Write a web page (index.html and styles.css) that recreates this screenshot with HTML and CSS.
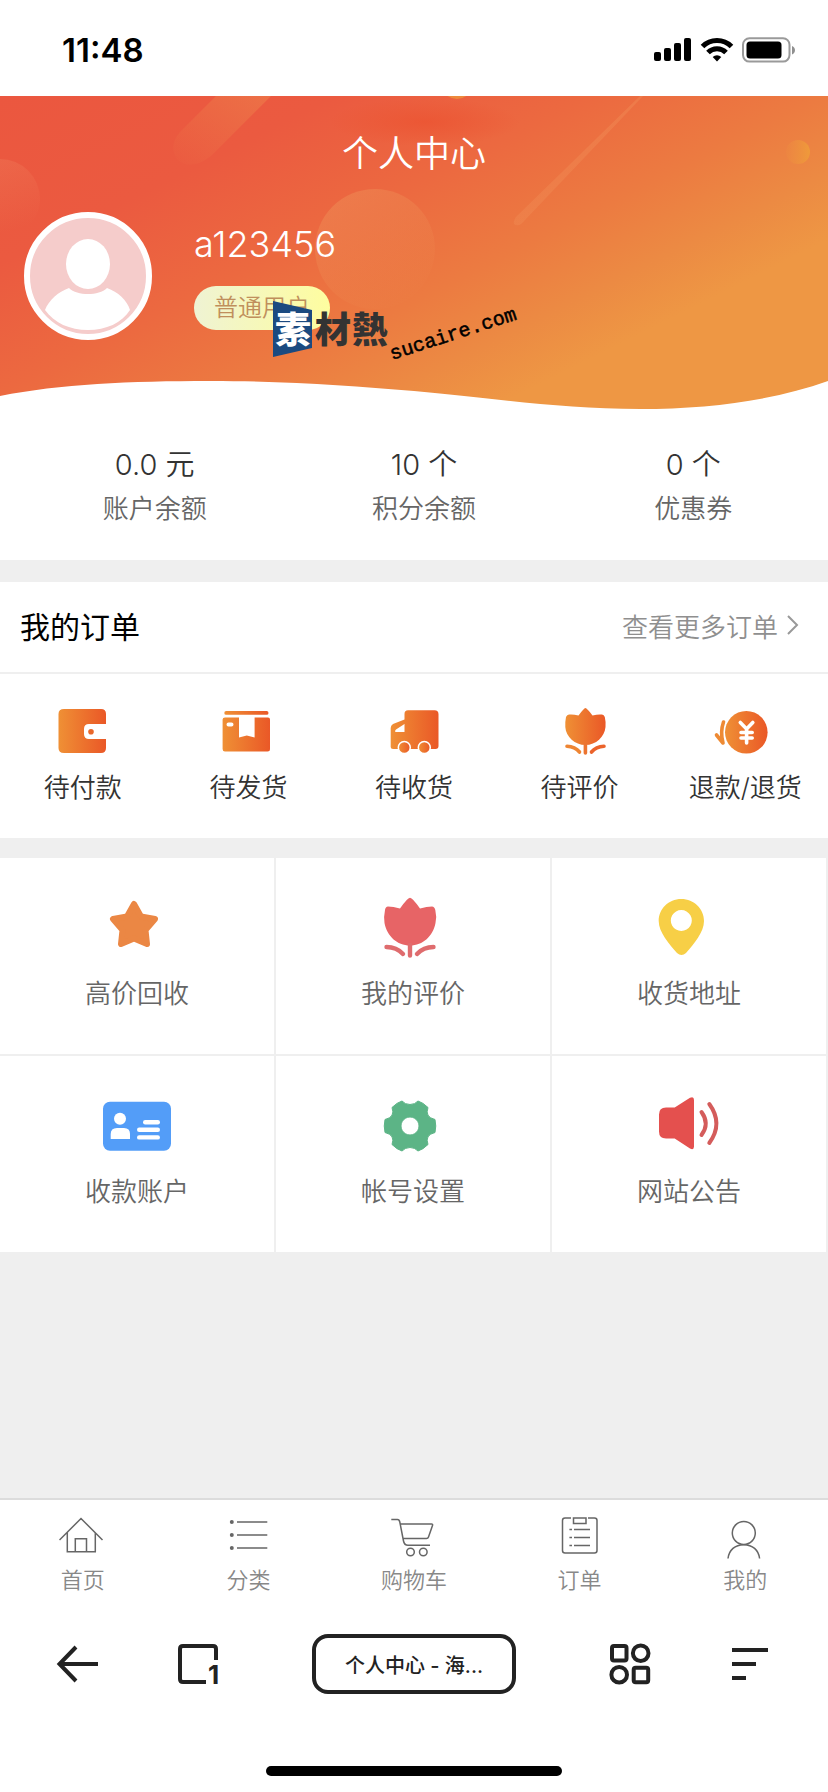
FILE: index.html
```html
<!DOCTYPE html>
<html lang="zh-CN">
<head>
<meta charset="utf-8">
<meta name="viewport" content="width=device-width, initial-scale=1">
<title>个人中心</title>
<link rel="stylesheet" href="styles.css">
</head>
<body>
<svg class="defs" width="0" height="0" aria-hidden="true">
  <defs>
    <linearGradient id="flame" x1="0" x2="1" y1="0" y2="0">
      <stop offset="0" stop-color="#ef9035"/>
      <stop offset="1" stop-color="#ea5827"/>
    </linearGradient>
  </defs>
</svg>

<div class="status">
  <time class="clock">11:48</time>
  <svg class="status-icons" width="142" height="26" viewBox="0 0 142 26" aria-label="信号、无线网络和电量">
    <rect x="0" y="15" width="7" height="9" rx="2"/>
    <rect x="10" y="11" width="7" height="13" rx="2"/>
    <rect x="20" y="6" width="7" height="18" rx="2"/>
    <rect x="30" y="1" width="7" height="23" rx="2"/>
    <g fill="none" stroke="#000" stroke-width="5">
      <path d="M48.500 9.500a20.500 20.500 0 0 1 29 0"/>
      <path d="M54 15.500a12.500 12.500 0 0 1 18 0"/>
    </g>
    <path d="M63 24.500l-4.300-4.400a6.200 6.200 0 0 1 8.600 0z"/>
    <rect x="89" y="1.200" width="46.500" height="23.400" rx="6.500" fill="none" stroke="#9a9a9a" stroke-width="2"/>
    <rect x="92.500" y="4.500" width="35" height="17" rx="3.500"/>
    <path d="M138 9c4 1.500 4 7 0 8.500z" fill="#8f8f8f"/>
  </svg>
</div>

<header class="hero">
  <svg class="hero-art" viewBox="0 0 828 314" preserveAspectRatio="none" aria-hidden="true">
    <defs>
      <linearGradient id="sky" gradientUnits="userSpaceOnUse" x1="0" y1="0" x2="224" y2="447">
        <stop offset="0" stop-color="#eb573f"/>
        <stop offset=".3" stop-color="#eb5a40"/>
        <stop offset=".53" stop-color="#ec6940"/>
        <stop offset=".74" stop-color="#ec7b41"/>
        <stop offset=".88" stop-color="#ec8a43"/>
        <stop offset="1" stop-color="#ee9744"/>
      </linearGradient>
      <linearGradient id="bubble" x1="0" y1="0" x2=".6" y2="1">
        <stop offset="0" stop-color="#f0a060" stop-opacity=".4"/>
        <stop offset="1" stop-color="#f0a060" stop-opacity=".02"/>
      </linearGradient>
      <linearGradient id="haze" x1="0" y1="0" x2=".3" y2="1">
        <stop offset="0" stop-color="#f0805c" stop-opacity=".4"/>
        <stop offset="1" stop-color="#f0805c" stop-opacity="0"/>
      </linearGradient>
      <linearGradient id="beam" x1="1" y1="0" x2="0" y2="1">
        <stop offset="0" stop-color="#ed7648" stop-opacity=".8"/>
        <stop offset="1" stop-color="#ed7648" stop-opacity=".03"/>
      </linearGradient>
      <linearGradient id="trail" x1="1" y1="0" x2="0" y2="1">
        <stop offset="0" stop-color="#f2935a" stop-opacity=".35"/>
        <stop offset="1" stop-color="#f2935a" stop-opacity=".3"/>
      </linearGradient>
      <linearGradient id="coin" x1="0" y1="0" x2="1" y2="0">
        <stop offset="0" stop-color="#ee9040" stop-opacity=".2"/>
        <stop offset="1" stop-color="#ef9a3a"/>
      </linearGradient>
      <radialGradient id="glow">
        <stop offset="0" stop-color="#ec5230" stop-opacity=".7"/>
        <stop offset="1" stop-color="#ec5230" stop-opacity="0"/>
      </radialGradient>
    </defs>
    <rect width="828" height="314" fill="url(#sky)"/>
    <ellipse cx="425" cy="26" rx="95" ry="24" fill="url(#glow)"/>
    <path d="M216 0H271L211 60Q190 76 177 63Q168 50 180 36Z" fill="url(#beam)"/>
    <circle cx="0" cy="103" r="40" fill="url(#haze)"/>
    <circle cx="375" cy="153" r="60" fill="url(#bubble)"/>
    <path d="M640 0h3L525 124q-6 8-11 4q-1-5 5-10z" fill="url(#trail)"/>
    <circle cx="798" cy="56" r="12" fill="url(#coin)"/>
    <circle cx="457" cy="-13" r="16" fill="#ed8a3c"/>
    <path d="M0 300C60 288 130 285 210 285C290 285 350 290 414 295C500 303 560 313 640 313C710 313 775 304 828 285V315H0Z" fill="#fff"/>
  </svg>
  <h1 class="title">个人中心</h1>
  <div class="profile">
    <svg class="avatar" width="128" height="128" viewBox="0 0 128 128" role="img" aria-label="头像">
      <circle cx="64" cy="64" r="61" fill="#f5cccb" stroke="#fff" stroke-width="6"/>
      <ellipse cx="64" cy="52" rx="22" ry="25" fill="#fff"/>
      <path d="M45 76C53 84 75 84 83 76C94 80 103 88 106 98C98 111 82 118 64 118C46 118 30 111 21 98C25 88 34 80 45 76Z" fill="#fff"/>
    </svg>
    <div class="who">
      <span class="name">a123456</span>
      <span class="level">普通用户</span>
    </div>
  </div>
  <svg class="watermark" width="250" height="70" viewBox="0 0 250 70" role="img" aria-label="素材熱 sucaire.com">
    <path d="M0 5L39 14V52L0 61Z" fill="#1b4a80"/>
    <text class="mark" x="2" y="47" fill="#fff">素</text>
    <text class="mark" x="42" y="47" fill="#333">材</text>
    <text class="mark" x="79" y="47" fill="#333">熱</text>
    <text class="site" transform="translate(119 64) rotate(-18)">sucaire.com</text>
  </svg>
</header>

<section class="stats">
  <a class="stat" href="#"><span class="stat-num">0.0 元</span><span class="stat-name">账户余额</span></a>
  <a class="stat" href="#"><span class="stat-num">10 个</span><span class="stat-name">积分余额</span></a>
  <a class="stat" href="#"><span class="stat-num">0 个</span><span class="stat-name">优惠券</span></a>
</section>

<section class="orders">
  <div class="orders-head">
    <h2 class="orders-title">我的订单</h2>
    <a class="more" href="#">查看更多订单
      <svg width="14" height="20" viewBox="0 0 14 20" fill="none" stroke="#999" stroke-width="2" aria-hidden="true"><path d="M2 1l9 9-9 9"/></svg>
    </a>
  </div>
  <div class="order-row">
    <a class="order" href="#">
      <svg class="order-icon" viewBox="0 0 56 56" fill="url(#flame)" aria-hidden="true">
        <path d="M9 7H46Q51 7 51 12V22H34Q29 22 29 27V32Q29 37 34 37H51V46Q51 51 46 51H9Q3.500 51 3.500 46V12Q3.500 7 9 7Z"/>
        <circle cx="36" cy="29.700" r="2.800" fill="#e9672a"/>
      </svg>
      待付款</a>
    <a class="order" href="#">
      <svg class="order-icon" viewBox="0 0 56 56" fill="url(#flame)" aria-hidden="true">
        <rect x="4.300" y="9" width="44.200" height="3.800" rx="1.900"/>
        <path fill-rule="evenodd" d="M5 15.500H19V35.500L26.800 33.500L34.600 35.500V15.500H48Q50 15.500 50 17.500V47Q50 49.500 47.500 49.500H5Q2.600 49.500 2.600 47V17.500Q2.600 15.500 5 15.500ZM8.500 20.500a2 2 0 0 0 0 4h3a2 2 0 0 0 0-4z"/>
      </svg>
      待发货</a>
    <a class="order" href="#">
      <svg class="order-icon" viewBox="0 0 56 56" fill="url(#flame)" aria-hidden="true">
        <path fill-rule="evenodd" d="M22 8.300H48.500Q52.500 8.300 52.500 12.300V44Q52.500 47 49.500 47H7Q4.700 47 4.700 45V26Q4.700 23.500 7 22L18.500 17.500V12Q18.500 8.300 22 8.300ZM18.500 22L10 27.500Q8 30 10 30H18.500Z"/>
        <g stroke="#fff" stroke-width="1.500">
          <circle cx="18.300" cy="45.500" r="6"/>
          <circle cx="38.300" cy="45.500" r="6"/>
        </g>
      </svg>
      待收货</a>
    <a class="order" href="#">
      <svg class="order-icon" viewBox="0 0 56 56" aria-hidden="true">
        <path d="M33.400 6Q35 6 40.500 13.500Q46 12 50 12.500Q52 12.500 52.800 15Q54 20 53.500 25C52.500 35 44 43 33.400 43C23 43 14 35 13.300 25Q13 20 14 15Q15 12.500 17 12.500Q21 12 26.500 13.500Q32 6 33.400 6Z" fill="url(#flame)"/>
        <g fill="none" stroke-width="3.600" stroke-linecap="round">
          <path d="M33.400 43V51" stroke="#ec7430"/>
          <path d="M15 44.200Q23 44.500 27.500 50" stroke="#ee8533"/>
          <path d="M52 44.200Q44 44.500 39.500 50" stroke="#eb632b"/>
        </g>
      </svg>
      待评价</a>
    <a class="order" href="#">
      <svg class="order-icon" viewBox="0 0 56 56" aria-hidden="true">
        <circle cx="29.300" cy="30.300" r="21.300" fill="url(#flame)"/>
        <path d="M6.500 20Q3 30 6 41L-0.500 33" fill="none" stroke="#ee8a33" stroke-width="3.600" stroke-linecap="round" stroke-linejoin="round"/>
        <path d="M23.300 20.500L29.600 27L35.800 20.500M29.600 27V41M24 30.500H35.200M24 36H35.200" fill="none" stroke="#fff" stroke-width="3.600" stroke-linecap="round"/>
      </svg>
      退款/退货</a>
  </div>
</section>

<nav class="tiles" aria-label="功能">
  <a class="tile" href="#">
    <svg class="tile-icon" viewBox="0 0 80 72" aria-hidden="true">
      <path d="M37 14L44 26.500L58 29L48.500 40L50 54L37 48.500L24 54L25.500 40L16 29L30 26.500Z" fill="#eb8744" stroke="#eb8744" stroke-width="6" stroke-linejoin="round"/>
    </svg>
    高价回收</a>
  <a class="tile" href="#">
    <svg class="tile-icon" viewBox="0 0 80 72" aria-hidden="true">
      <path d="M37 7.700Q39.500 7.700 47 18.500Q54 16.500 59 16.500Q61.500 16.500 62.300 20Q64 27 62.500 33C60 46 50 55.500 37 55.500C24 55.500 14 46 11.500 33Q10.500 27 12 20Q12.500 16.500 15 16.500Q20 16.500 27 18.500Q34.500 7.700 37 7.700Z" fill="#e76466"/>
      <path d="M37 55V65.500M13.500 57Q23.500 57 30 64M60.500 57Q50.500 57 44 64" fill="none" stroke="#df6c6e" stroke-width="4.400" stroke-linecap="round"/>
    </svg>
    我的评价</a>
  <a class="tile" href="#">
    <svg class="tile-icon" viewBox="0 0 80 72" aria-hidden="true">
      <path fill-rule="evenodd" d="M32.300 9C45 9 55 19 55 31C55 42 45 54 37 63Q32.500 67 28 63C20 54 9.700 42 9.700 31C9.700 19 19.500 9 32.300 9ZM32.300 20a10.500 10.500 0 1 0 .01 0z" fill="#f7cf46"/>
    </svg>
    收货地址</a>
  <a class="tile" href="#">
    <svg class="tile-icon" viewBox="0 0 80 72" aria-hidden="true">
      <rect x="6" y="13.700" width="68" height="49" rx="7" fill="#539df8"/>
      <g fill="#fff">
        <circle cx="23" cy="30.700" r="6"/>
        <path d="M13.700 51V46Q13.700 40 20 40H27Q33 40 33 46V51Z"/>
        <rect x="46" y="32" width="17" height="4.400" rx="2.200"/>
        <rect x="40" y="39.600" width="23" height="4.400" rx="2.200"/>
        <rect x="40" y="47.200" width="23" height="4.400" rx="2.200"/>
      </g>
    </svg>
    收款账户</a>
  <a class="tile" href="#">
    <svg class="tile-icon" viewBox="0 0 80 72" aria-hidden="true">
      <path fill-rule="evenodd" d="M29 13Q32 16.500 37 16.500T45 13Q50 14.500 55 19.500Q51.500 29 62 31.500Q63.500 38 62 44.500Q51.500 47 55 56.500Q50 61.500 45 63Q42 59.500 37 59.500T29 63Q24 61.500 19 56.500Q22.500 47 12 44.500Q10.500 38 12 31.500Q22.500 29 19 19.500Q24 14.500 29 13ZM37 29a9 9 0 1 0 .01 0z" fill="#5cb486" stroke="#5cb486" stroke-width="1" stroke-linejoin="round"/>
    </svg>
    帐号设置</a>
  <a class="tile" href="#">
    <svg class="tile-icon" viewBox="0 0 80 72" aria-hidden="true">
      <path d="M17 19.500H25.700L41 9.800Q45 8 45 12V58.500Q45 62.500 41 60.500L25.700 50.500H17Q10 50.500 10 43.500V26.500Q10 19.500 17 19.500Z" fill="#e4504e"/>
      <path d="M52.500 24Q61 35.500 52.500 47M60.300 16Q74.500 35.500 60.300 55" fill="none" stroke="#d45c5b" stroke-width="4" stroke-linecap="round"/>
    </svg>
    网站公告</a>
</nav>

<nav class="tabs" aria-label="主导航">
  <a class="tab" href="#">
    <svg class="tab-icon" viewBox="0 0 48 48" aria-hidden="true"><path d="M.5 28L22 6.500L43.500 28M8.300 20.500V39.700H36.300V20.500M16.300 39.700V26.700H27.500V39.700"/></svg>
    首页</a>
  <a class="tab" href="#">
    <svg class="tab-icon" viewBox="0 0 48 48" aria-hidden="true"><path d="M13 10H43.300M13 23H43.300M13 36H43.300"/><g fill="#666" stroke="none"><circle cx="7.800" cy="10" r="2"/><circle cx="7.800" cy="23" r="2"/><circle cx="7.800" cy="36" r="2"/></g></svg>
    分类</a>
  <a class="tab" href="#">
    <svg class="tab-icon" viewBox="0 0 48 48" aria-hidden="true"><path d="M1.300 7.500H7.500Q9.300 7.500 9.800 10L13.500 29Q14.300 33.300 18 33.300H40M10.500 12H41.500Q43 12 42.500 13.500L38.500 25Q38 26.500 36.500 26.500H13"/><circle cx="20.500" cy="40" r="3.800"/><circle cx="33.300" cy="40" r="3.800"/></svg>
    购物车</a>
  <a class="tab" href="#">
    <svg class="tab-icon" viewBox="0 0 48 48" aria-hidden="true"><path d="M15 6H9Q6.500 6 6.500 8.500V38.500Q6.500 41 9 41H38.500Q41 41 41 38.500V8.500Q41 6 38.500 6H32M17.500 6H30V11.500H17.500ZM13.400 17.500H16M18 17.500H34M13.400 25.500H16M18 25.500H34M13.400 33.500H16M18 33.500H34"/></svg>
    订单</a>
  <a class="tab" href="#">
    <svg class="tab-icon" viewBox="0 0 48 48" aria-hidden="true"><circle cx="22.800" cy="21" r="11.500"/><path d="M7 46.500C8 38 14 32.700 22.800 32.700C31.500 32.700 37.600 38 38.600 46.500"/></svg>
    我的</a>
</nav>

<div class="browser">
  <div class="browser-side">
    <button class="tool" type="button" aria-label="返回">
      <svg class="tool-icon" viewBox="0 0 48 48" aria-hidden="true"><path d="M44 24H6M22 7L5.500 24L22 41"/></svg>
    </button>
    <button class="tool" type="button" aria-label="标签页">
      <svg class="tool-icon" viewBox="0 0 48 48" aria-hidden="true"><path d="M32 42H9Q6 42 6 39V9Q6 6 9 6H39Q42 6 42 9V20"/><text class="tab-count" x="34" y="44">1</text></svg>
    </button>
  </div>
  <button class="address" type="button">个人中心 - 海...</button>
  <div class="browser-side browser-side-end">
    <button class="tool" type="button" aria-label="应用">
      <svg class="tool-icon" viewBox="0 0 48 48" aria-hidden="true"><rect x="6" y="6" width="14.500" height="14.500" rx="2"/><circle cx="34.700" cy="13.200" r="7.800"/><circle cx="13.200" cy="34.700" r="7.800"/><rect x="27.700" y="27.700" width="14.500" height="14.500" rx="2"/></svg>
    </button>
    <button class="tool" type="button" aria-label="菜单">
      <svg class="tool-icon" viewBox="0 0 48 48" aria-hidden="true"><path d="M6 10H42M6 24H30M6 38H20"/></svg>
    </button>
  </div>
</div>
<div class="home-bar"></div>
</body>
</html>
```

FILE: styles.css
```css
* {
  box-sizing: border-box;
}

body {
  margin: 0;
  min-height: 100vh;
  display: flex;
  flex-direction: column;
  background: #fff;
  color: #333;
  font-family: Inter, "Noto Sans CJK SC", sans-serif;
  font-weight: 350;
  font-size: 26px;
}

a {
  color: inherit;
  text-decoration: none;
}

button {
  border: 0;
  padding: 0;
  background: none;
  color: inherit;
  font: inherit;
}

svg {
  display: block;
  flex: none;
}

.defs {
  position: absolute;
}

/* Phone status bar */
.status {
  display: flex;
  align-items: center;
  justify-content: space-between;
  height: 96px;
  padding: 4px 32px 0 62px;
}

.clock {
  color: #000;
  font-size: 33px;
  font-weight: 600;
}

/* Profile banner */
.hero {
  position: relative;
  padding: 33px 24px 70px;
  color: #fff;
}

.hero-art {
  position: absolute;
  inset: 0;
  width: 100%;
  height: 100%;
}

.title {
  position: relative;
  margin: 0 0 33px;
  font-size: 36px;
  font-weight: 350;
  line-height: 50px;
  text-align: center;
}

.profile {
  position: relative;
  display: flex;
  align-items: center;
  gap: 42px;
}

.who {
  display: flex;
  flex-direction: column;
  align-items: flex-start;
  gap: 20px;
}

.name {
  font-size: 36px;
  font-weight: 300;
  line-height: 44px;
}

.level {
  padding: 0 20px;
  border-radius: 22px;
  background: linear-gradient(90deg, #eff3d3, #fefd9f);
  color: #c08f5c;
  font-size: 24px;
  line-height: 44px;
}

.watermark {
  position: absolute;
  left: 273px;
  top: 200px;
}

.mark {
  font-family: "Noto Sans CJK TC", sans-serif;
  font-size: 36px;
  font-weight: 900;
}

.site {
  fill: #000;
  stroke: #000;
  stroke-width: .5;
  font-family: "Liberation Mono", monospace;
  font-size: 20px;
  font-weight: 400;
}

/* Balances */
.stats {
  display: grid;
  grid-template-columns: repeat(3, 1fr);
  padding: 33px 0 29px 20px;
}

.stat {
  display: flex;
  flex-direction: column;
  text-align: center;
  line-height: 44px;
}

.stat-num {
  font-size: 29px;
}

.stat-name {
  color: #666;
}

/* Orders */
.orders {
  border-top: 22px solid #efefef;
}

.orders-head {
  display: flex;
  align-items: center;
  justify-content: space-between;
  height: 92px;
  padding: 0 28px 4px 20px;
  border-bottom: 2px solid #efefef;
}

.orders-title {
  margin: 0;
  color: #000;
  font-size: 30px;
  font-weight: 400;
}

.more {
  display: flex;
  align-items: center;
  gap: 8px;
  color: #8f8f8f;
}

.order-row {
  display: grid;
  grid-template-columns: repeat(5, 1fr);
  padding: 28px 0 30px;
}

.order {
  display: flex;
  flex-direction: column;
  align-items: center;
  gap: 10px;
  line-height: 40px;
}

.order-icon {
  width: 56px;
  height: 56px;
  overflow: visible;
}

/* Feature tiles */
.tiles {
  flex: 1;
  display: grid;
  grid-template-columns: repeat(3, 1fr);
  align-content: start;
  row-gap: 2px;
  padding-top: 20px;
  background: #efefef;
}

.tile {
  display: flex;
  flex-direction: column;
  align-items: center;
  gap: 13px;
  padding: 32px 0 41px;
  border-right: 2px solid #efefef;
  background: #fff;
  color: #666;
  line-height: 38px;
}

.tile-icon {
  width: 80px;
  height: 72px;
}

/* Bottom tab bar */
.tabs {
  display: grid;
  grid-template-columns: repeat(5, 1fr);
  padding: 12px 0 4px;
  border-top: 2px solid #dcdcdc;
}

.tab {
  display: flex;
  flex-direction: column;
  align-items: center;
  gap: 4px;
  color: #888;
  font-size: 22px;
  line-height: 32px;
}

.tab-icon {
  width: 48px;
  height: 48px;
  fill: none;
  stroke: #666;
  stroke-width: 1.5;
}

/* Browser toolbar */
.browser {
  display: grid;
  grid-template-columns: 1fr auto 1fr;
  align-items: center;
  padding: 34px 54px 72px;
  color: #222;
}

.browser-side {
  display: flex;
  gap: 72px;
}

.browser-side-end {
  justify-content: flex-end;
}

.tool-icon {
  width: 48px;
  height: 48px;
  fill: none;
  stroke: #222;
  stroke-width: 4;
  overflow: visible;
}

.tab-count {
  fill: #222;
  stroke: none;
  font-size: 26px;
  font-weight: 700;
}

.address {
  height: 60px;
  padding: 0 29px;
  border: 4px solid #222;
  border-radius: 16px;
  font-size: 20px;
  font-weight: 500;
}

.home-bar {
  align-self: center;
  width: 296px;
  height: 10px;
  margin-bottom: 16px;
  border-radius: 5px;
  background: #000;
}
```
